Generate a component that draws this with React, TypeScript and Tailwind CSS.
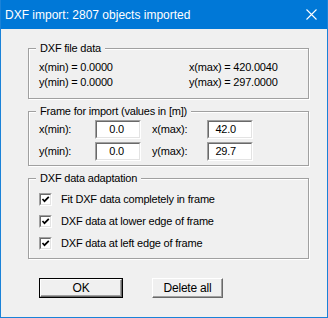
import type { ReactNode } from 'react'

// Classic Windows dialog: "DXF import"

const FONT = "font-['Liberation_Sans',Arial,sans-serif]"

function GroupBox({ title, className, children }: { title: string; className?: string; children: ReactNode }) {
  return (
    <div
      className={`relative border border-[#a0a0a0] shadow-[inset_1px_1px_0_#fff,1px_1px_0_#fff] ${className ?? ''}`}
    >
      <span className="absolute -top-[8px] left-[7px] bg-[#f0f0f0] px-[4px] leading-[15px]">{title}</span>
      {children}
    </div>
  )
}

function Field({ value }: { value: string }) {
  return (
    <div className="h-[19px] w-[46px] border-t border-l border-t-[#a0a0a0] border-l-[#a0a0a0] border-b border-r border-b-white border-r-white">
      <div className="h-full w-full bg-white border-t border-l border-t-[#696969] border-l-[#696969] border-b border-r border-b-[#e3e3e3] border-r-[#e3e3e3] text-right pr-[15px] leading-[15px]">
        {value}
      </div>
    </div>
  )
}

function Check({ label }: { label: string }) {
  return (
    <div className="flex h-[22px] items-center">
      <span className="flex h-[13px] w-[13px] border-t border-l border-t-[#a0a0a0] border-l-[#a0a0a0] border-b border-r border-b-white border-r-white">
        <span className="flex flex-1 items-center justify-center bg-white border-t border-l border-t-[#696969] border-l-[#696969] border-b border-r border-b-[#e3e3e3] border-r-[#e3e3e3]">
          <svg width="9" height="9" viewBox="0 0 9 9">
            <path d="M1.5 4 L3.5 6.2 L7.8 1.8" fill="none" stroke="#000" strokeWidth="1.7" />
          </svg>
        </span>
      </span>
      <span className="ml-[9px]">{label}</span>
    </div>
  )
}

function Button({ label, isDefault, className }: { label: string; isDefault?: boolean; className?: string }) {
  return (
    <button
      type="button"
      className={`h-[20px] ${isDefault ? 'border border-black' : ''} ${className ?? ''}`}
    >
      <span className="flex h-full w-full items-center justify-center bg-[#f0f0f0] border-t border-l border-t-white border-l-white border-b border-r border-b-[#696969] border-r-[#696969] shadow-[inset_-1px_-1px_0_#a0a0a0] text-[12px] leading-none">
        {label}
      </span>
    </button>
  )
}

export default function App() {
  return (
    <div className={`${FONT} h-[318px] w-[328px] bg-[#f0f0f0] border-x border-b border-[#1a82d8] text-[11px] text-black tracking-[-0.2px] flex flex-col`}>
      {/* Title bar */}
      <div className="flex h-[29px] items-center bg-[#0078d7] pl-[4px] pr-[10px] text-white">
        <span className="flex-1 text-[12px] tracking-normal">DXF import: 2807 objects imported</span>
        <svg width="11" height="11" viewBox="0 0 11 11">
          <path d="M0.5 0.5 L10.5 10.5 M10.5 0.5 L0.5 10.5" stroke="#fff" strokeWidth="1.1" />
        </svg>
      </div>

      <div className="flex flex-col pl-[27px] pr-[18px]">
        <GroupBox title="DXF file data" className="mt-[19px] pl-[10px] pt-[11px] pb-[8px]">
          <div className="flex leading-[15px]">
            <span className="w-[150px]">x(min) = 0.0000</span>
            <span>x(max) = 420.0040</span>
          </div>
          <div className="flex leading-[15px]">
            <span className="w-[150px]">y(min) = 0.0000</span>
            <span>y(max) = 297.0000</span>
          </div>
        </GroupBox>

        <GroupBox title="Frame for import (values in [m])" className="mt-[12px] pl-[10px] pt-[8px] pb-[4px]">
          <div className="flex flex-col gap-[3px]">
            <div className="flex items-center">
              <span className="w-[56px]">x(min):</span>
              <Field value="0.0" />
              <span className="ml-[11px] w-[55px]">x(max):</span>
              <Field value="42.0" />
            </div>
            <div className="flex items-center">
              <span className="w-[56px]">y(min):</span>
              <Field value="0.0" />
              <span className="ml-[11px] w-[55px]">y(max):</span>
              <Field value="29.7" />
            </div>
          </div>
        </GroupBox>

        <GroupBox title="DXF data adaptation" className="mt-[12px] pl-[10px] pt-[9px] pb-[4px]">
          <Check label="Fit DXF data completely in frame" />
          <Check label="DXF data at lower edge of frame" />
          <Check label="DXF data at left edge of frame" />
        </GroupBox>

        <div className="mt-[19px] flex pl-[11px]">
          <Button label="OK" isDefault className="w-[84px]" />
          <Button label="Delete all" className="ml-[29px] w-[71px]" />
        </div>
      </div>
    </div>
  )
}
